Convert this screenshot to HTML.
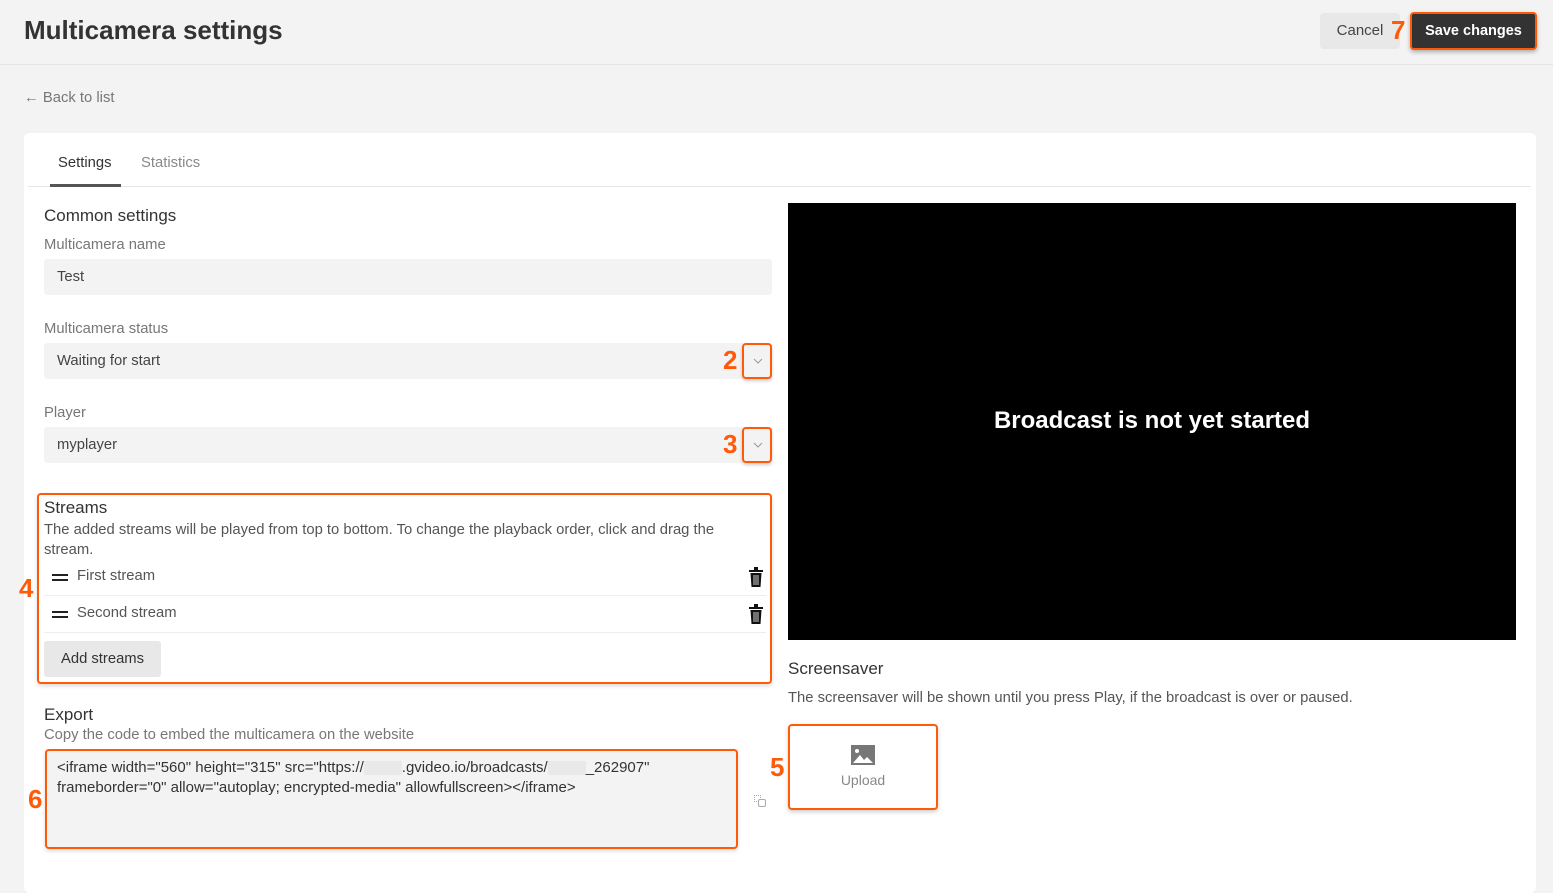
<!DOCTYPE html>
<html><head><meta charset="utf-8"><style>
*{box-sizing:border-box;margin:0;padding:0}
body{width:1553px;height:873px;background:#f3f3f3;font-family:"Liberation Sans",sans-serif;color:#333;position:relative;overflow:hidden}
.a{position:absolute}
.or{border:2px solid #ff5a0a;border-radius:4px}
.num{position:absolute;color:#ff5a0a;font-weight:bold;font-size:26px}
.lbl{position:absolute;font-size:14.8px;color:#777}
.inp{position:absolute;background:#f3f3f3;border-radius:3px;font-size:14.8px;color:#444;padding-left:13px;line-height:36px}
.h{position:absolute;font-size:16.5px;color:#333;font-weight:bold;-webkit-text-stroke:0}
</style></head><body>
<div class="a" style="left:24px;top:15px;font-size:26px;color:#333;font-weight:bold">Multicamera settings</div>
<div class="a" style="left:1320px;top:13px;width:80px;height:36px;background:#e8e8e8;border-radius:4px;font-size:15px;color:#444;line-height:36px;text-align:center">Cancel</div>
<div class="num" style="left:1391px;top:15px">7</div>
<div class="a" style="left:1410px;top:12px;width:127px;height:38px;background:#333;border:2px solid #ff5a0a;border-radius:4px;color:#fff;font-size:14.5px;font-weight:bold;line-height:34px;text-align:center;box-shadow:0 2px 4px rgba(0,0,0,.3)">Save changes</div>
<div class="a" style="left:0;top:64px;width:1553px;height:1px;background:#e4e4e4"></div>
<div class="a" style="left:24px;top:90px;font-size:14.8px;color:#777">← Back to list</div>
<div class="a" style="left:24px;top:133px;width:1512px;height:760px;background:#fff;border-radius:6px"></div>
<div class="a" style="left:58px;top:155px;font-size:14.8px;color:#333">Settings</div>
<div class="a" style="left:141px;top:155px;font-size:14.8px;color:#888">Statistics</div>
<div class="a" style="left:28px;top:186px;width:1503px;height:1px;background:#e6e6e6"></div>
<div class="a" style="left:50px;top:184px;width:71px;height:3px;background:#555"></div>
<div class="h" style="left:44px;top:206px;font-weight:normal;font-size:17px">Common settings</div>
<div class="lbl" style="left:44px;top:237px">Multicamera name</div>
<div class="inp" style="left:44px;top:259px;width:728px">Test</div>
<div class="lbl" style="left:44px;top:321px">Multicamera status</div>
<div class="inp" style="left:44px;top:343px;width:728px">Waiting for start</div>
<div class="num" style="left:723px;top:345px">2</div>
<div class="a or" style="left:742px;top:343px;width:30px;height:36px;box-shadow:0 2px 3px rgba(0,0,0,.2)"><svg style="position:absolute;left:9px;top:13px" width="10" height="6" viewBox="0 0 10 6"><path d="M1 1l4 4 4-4" fill="none" stroke="#999" stroke-width="1"/></svg></div>
<div class="lbl" style="left:44px;top:405px">Player</div>
<div class="inp" style="left:44px;top:427px;width:728px">myplayer</div>
<div class="num" style="left:723px;top:429px">3</div>
<div class="a or" style="left:742px;top:427px;width:30px;height:36px;box-shadow:0 2px 3px rgba(0,0,0,.2)"><svg style="position:absolute;left:9px;top:13px" width="10" height="6" viewBox="0 0 10 6"><path d="M1 1l4 4 4-4" fill="none" stroke="#999" stroke-width="1"/></svg></div>
<div class="a or" style="left:37px;top:493px;width:735px;height:191px;box-shadow:0 2px 4px rgba(0,0,0,.15)"></div>
<div class="h" style="left:44px;top:498px;font-weight:normal;font-size:17px">Streams</div>
<div class="a" style="left:44px;top:520px;font-size:14.8px;color:#555;line-height:20px;width:700px">The added streams will be played from top to bottom. To change the playback order, click and drag the stream.</div>
<div class="num" style="left:19px;top:573px">4</div>
<div class="a" style="left:52px;top:574px;width:16px;height:2px;background:#222"></div>
<div class="a" style="left:52px;top:579px;width:16px;height:2px;background:#222"></div>
<div class="a" style="left:77px;top:568px;font-size:14.8px;color:#555">First stream</div>
<div class="a" style="left:44px;top:595px;width:722px;height:1px;background:#eee"></div>
<div class="a" style="left:52px;top:611px;width:16px;height:2px;background:#222"></div>
<div class="a" style="left:52px;top:616px;width:16px;height:2px;background:#222"></div>
<div class="a" style="left:77px;top:605px;font-size:14.8px;color:#555">Second stream</div>
<div class="a" style="left:44px;top:632px;width:722px;height:1px;background:#eee"></div>
<svg class="a" style="left:749px;top:567px" width="14" height="20" viewBox="0 0 14 20"><rect x="0" y="3" width="14" height="2" fill="#111"/><rect x="5" y="0" width="4" height="3" fill="#111"/><path d="M1.5 6h11l-1 14h-9z" fill="#111"/><path d="M5 8v10M7 8v10M9 8v10" stroke="#fff" stroke-width=".8"/></svg>
<svg class="a" style="left:749px;top:604px" width="14" height="20" viewBox="0 0 14 20"><rect x="0" y="3" width="14" height="2" fill="#111"/><rect x="5" y="0" width="4" height="3" fill="#111"/><path d="M1.5 6h11l-1 14h-9z" fill="#111"/><path d="M5 8v10M7 8v10M9 8v10" stroke="#fff" stroke-width=".8"/></svg>
<div class="a" style="left:44px;top:641px;width:117px;height:36px;background:#e8e8e8;border-radius:3px;font-size:14.8px;color:#333;line-height:36px;text-align:center">Add streams</div>
<div class="h" style="left:44px;top:705px;font-weight:normal;font-size:17px">Export</div>
<div class="lbl" style="left:44px;top:727px">Copy the code to embed the multicamera on the website</div>
<div class="a or" style="left:45px;top:749px;width:693px;height:100px;background:#f3f3f3;box-shadow:0 2px 4px rgba(0,0,0,.15)"></div>
<div class="a" style="left:57px;top:758px;font-size:15px;color:#333;line-height:20px;white-space:nowrap">&lt;iframe width="560" height="315" src="https://<span style="display:inline-block;width:38px;height:14px;background:#e9e9e9;vertical-align:middle"></span>.gvideo.io/broadcasts/<span style="display:inline-block;width:38px;height:14px;background:#e9e9e9;vertical-align:middle"></span>_262907"<br>frameborder="0" allow="autoplay; encrypted-media" allowfullscreen&gt;&lt;/iframe&gt;</div>
<div class="num" style="left:28px;top:784px">6</div>
<div class="a" style="left:754px;top:795px;width:7px;height:7px;border:1px dotted #aaa"></div>
<div class="a" style="left:758px;top:799px;width:8px;height:8px;border:1px solid #aaa;border-radius:2px;background:#fff"></div>
<div class="a" style="left:788px;top:203px;width:728px;height:437px;background:#000"></div>
<div class="a" style="left:788px;top:407px;width:728px;text-align:center;color:#fff;font-weight:bold;font-size:24px">Broadcast is not yet started</div>
<div class="h" style="left:788px;top:659px;font-weight:normal;font-size:17px">Screensaver</div>
<div class="a" style="left:788px;top:690px;font-size:14.8px;color:#555">The screensaver will be shown until you press Play, if the broadcast is over or paused.</div>
<div class="num" style="left:770px;top:752px">5</div>
<div class="a or" style="left:788px;top:724px;width:150px;height:86px;box-shadow:0 2px 4px rgba(0,0,0,.2)"></div>
<svg class="a" style="left:851px;top:745px" width="24" height="20" viewBox="0 0 24 20"><rect width="24" height="20" fill="#777"/><circle cx="6" cy="6" r="2" fill="#fff"/><path d="M2 18l7-8 4 5 3-3 6 6z" fill="#fff"/></svg>
<div class="a" style="left:788px;top:772px;width:150px;text-align:center;font-size:14px;color:#888">Upload</div>
</body></html>
